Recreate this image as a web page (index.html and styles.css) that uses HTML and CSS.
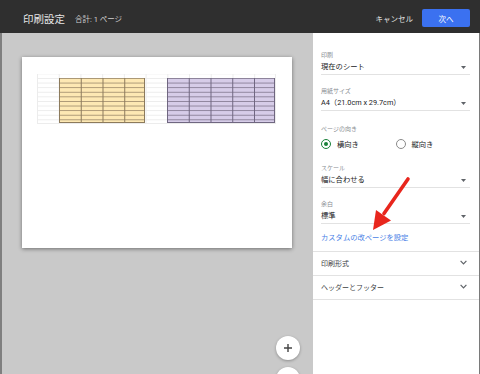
FILE: index.html
```html
<!DOCTYPE html>
<html lang="ja">
<head>
    <meta charset="UTF-8">
    <meta name="viewport" content="width=device-width, initial-scale=1.0">
    <title>印刷設定</title>
    <link rel="stylesheet" href="styles.css">
</head>
<body>
    <div class="topbar">
        <div class="title">印刷設定</div>
        <div class="total">合計: 1 ページ</div>
        <div class="spacer"></div>
        <button class="cancel">キャンセル</button>
        <button class="next">次へ</button>
    </div>

    <div class="main">
        <div class="preview">
            <div class="page">
                <div class="sheet">
                    <div class="block yellow"></div>
                    <div class="block purple"></div>
                </div>
            </div>
            <button class="zoom zoom-in">
                <svg width="10" height="10" viewBox="0 0 10 10"><path d="M5 1v8M1 5h8" stroke="#444" stroke-width="1.4"/></svg>
            </button>
            <button class="zoom zoom-out">
                <svg width="10" height="10" viewBox="0 0 10 10"><path d="M1 5h8" stroke="#444" stroke-width="1.4"/></svg>
            </button>
        </div>

        <div class="panel">
            <div class="field">
                <div class="label">印刷</div>
                <div class="value">現在のシート<svg class="caret" width="5" height="3" viewBox="0 0 5 3"><path d="M0 0h5L2.5 3z" fill="#5f6368"/></svg></div>
            </div>
            <div class="field">
                <div class="label">用紙サイズ</div>
                <div class="value">A4（21.0cm x 29.7cm）<svg class="caret" width="5" height="3" viewBox="0 0 5 3"><path d="M0 0h5L2.5 3z" fill="#5f6368"/></svg></div>
            </div>
            <div class="group">
                <div class="label">ページの向き</div>
                <div class="radios">
                    <div class="option"><span class="radio checked"></span>横向き</div>
                    <div class="option"><span class="radio"></span>縦向き</div>
                </div>
            </div>
            <div class="field scale">
                <div class="label">スケール</div>
                <div class="value">幅に合わせる<svg class="caret" width="5" height="3" viewBox="0 0 5 3"><path d="M0 0h5L2.5 3z" fill="#5f6368"/></svg></div>
            </div>
            <div class="field">
                <div class="label">余白</div>
                <div class="value">標準<svg class="caret" width="5" height="3" viewBox="0 0 5 3"><path d="M0 0h5L2.5 3z" fill="#5f6368"/></svg></div>
            </div>
            <div class="link">カスタムの改ページを設定</div>
            <div class="section">印刷形式<svg width="7" height="5" viewBox="0 0 7 5"><path d="M0.6 0.8L3.5 3.8L6.4 0.8" fill="none" stroke="#5f6368" stroke-width="1.2"/></svg></div>
            <div class="section last">ヘッダーとフッター<svg width="7" height="5" viewBox="0 0 7 5"><path d="M0.6 0.8L3.5 3.8L6.4 0.8" fill="none" stroke="#5f6368" stroke-width="1.2"/></svg></div>
        </div>
    </div>

    <!-- red arrow pointing at the custom page break link -->
    <svg class="arrow" width="480" height="374" viewBox="0 0 480 374">
        <path d="M408 179L384 213.5" stroke="#e8261d" stroke-width="3.6" stroke-linecap="round"/>
        <path d="M373 230L376 210L391 220.5z" fill="#e8261d"/>
    </svg>
</body>
</html>
```

FILE: styles.css
```css
*{
    box-sizing: border-box;
}
body{
    margin: 0;
    width: 480px;
    height: 374px;
    overflow: hidden;
    position: relative;
    background-color: #c9c9c9;
    font-family: Roboto, "Noto Sans CJK JP", sans-serif;
}
button{
    font-family: inherit;
    padding: 0;
    border: none;
}

/* top bar */
.topbar{
    height: 33px;
    background-color: #2f2f2f;
    display: flex;
    align-items: center;
    padding: 3px 10px 0 23px;
}
.title{
    color: #e6e6e6;
    font-size: 10.5px;
}
.total{
    color: #cfcfcf;
    font-size: 7.5px;
    margin-left: 10px;
}
.spacer{
    flex: 1;
}
.cancel{
    background: none;
    color: #e2e2e2;
    font-size: 7.5px;
    margin-right: 9px;
}
.next{
    width: 48px;
    height: 18px;
    background-color: #3b71f0;
    color: white;
    border-radius: 2px;
    font-size: 7.5px;
}

.main{
    display: flex;
    height: 341px;
}

/* preview */
.preview{
    width: 313px;
    border-left: 2px solid #7f7f7f;
    padding: 24px 0 0 20px;
    position: relative;
}
.page{
    width: 270px;
    height: 191px;
    background-color: white;
    box-shadow: 0 1px 4px rgba(0,0,0,.45);
    padding: 17px 0 0 15px;
}
.sheet{
    width: 239px;
    height: 50px;
    display: grid;
    grid-template-columns: repeat(11, 1fr);
    grid-template-rows: 4px repeat(10, 1fr);
    border-right: 1px solid #ececec;
    border-bottom: 1px solid #ececec;
    background-image: linear-gradient(to right, #ececec 1px, transparent 1px),
                      linear-gradient(to bottom, #ececec 1px, transparent 1px);
    background-size: 21.727px 100%, 100% 4.6px;
    background-position: 0 0, 0 4px;
}
.block{
    background-size: 21.75px 100%, 100% 4.6px;
    border-right: 1px solid;
    border-bottom: 1px solid;
}
.yellow{
    grid-column: 2 / 6;
    grid-row: 2 / 12;
    background-color: #fde8b3;
    border-color: #8c7a5c;
    background-image: linear-gradient(to right, #8c7a5c 1px, transparent 1px),
                      linear-gradient(to bottom, #a89573 1px, transparent 1px);
}
.purple{
    grid-column: 7 / 12;
    grid-row: 2 / 12;
    background-color: #d6cce8;
    border-color: #6f6680;
    background-image: linear-gradient(to right, #6f6680 1px, transparent 1px),
                      linear-gradient(to bottom, #8b8199 1px, transparent 1px);
}
.zoom{
    position: absolute;
    left: 274px;
    width: 24px;
    height: 24px;
    border-radius: 50%;
    background-color: white;
    box-shadow: 0 1px 3px rgba(0,0,0,.3);
    display: flex;
    align-items: center;
    justify-content: center;
}
.zoom-in{
    top: 303px;
}
.zoom-out{
    top: 334px;
}

/* settings panel */
.panel{
    width: 167px;
    background-color: white;
    border-right: 1px solid #7a7a7a;
    padding-top: 17px;
}
.label{
    font-size: 6px;
    line-height: 10px;
    color: #888c91;
}
.field{
    margin: 0 9px 0 8px;
    border-bottom: 1px solid #e2e2e2;
}
.field + .field{
    margin-top: 11px;
}
.field.scale{
    margin-top: 9px;
}
.value{
    font-size: 7.3px;
    line-height: 14px;
    color: #202124;
    display: flex;
    justify-content: space-between;
    align-items: center;
}
.caret{
    margin-right: 4px;
}
.group{
    margin: 13px 9px 0 8px;
}
.radios{
    display: flex;
    height: 20px;
    align-items: center;
}
.option{
    width: 75px;
    display: flex;
    align-items: center;
    font-size: 7.3px;
    color: #202124;
}
.radio{
    width: 10px;
    height: 10px;
    border-radius: 50%;
    border: 1.3px solid #8a8a8a;
    margin-right: 6px;
    display: flex;
    align-items: center;
    justify-content: center;
}
.radio.checked{
    border-color: #188038;
}
.radio.checked::after{
    content: '';
    width: 4.6px;
    height: 4.6px;
    border-radius: 50%;
    background-color: #188038;
}
.link{
    margin: 7px 8px 6px 8px;
    font-size: 7.3px;
    line-height: 14px;
    color: #4a7fe6;
}
.section{
    height: 24px;
    border-top: 1px solid #e2e2e2;
    padding: 0 12px 2px 8px;
    display: flex;
    align-items: center;
    justify-content: space-between;
    font-size: 7px;
    color: #3c4043;
}
.section.last{
    border-bottom: 1px solid #e2e2e2;
    height: 25px;
}

.arrow{
    position: absolute;
    left: 0;
    top: 0;
    pointer-events: none;
}
```
